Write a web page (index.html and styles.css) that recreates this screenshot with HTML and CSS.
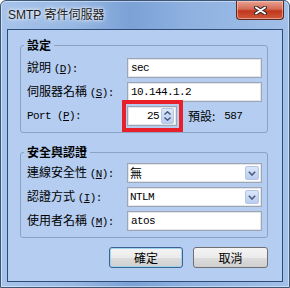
FILE: index.html
```html
<html>
    <head>
        <title>SMTP 寄件伺服器</title>
        <link rel="stylesheet" href="styles.css">
    </head>
    <body>
        <div class="window">
            <div class="titlebar">
                <span class="title">SMTP 寄件伺服器</span>
                <div class="close">
                    <svg width="13" height="9" viewBox="0 0 13 9">
                        <path d="M2 1.5 L11 7.5 M11 1.5 L2 7.5" stroke="#3a2a2a" stroke-width="4" stroke-linecap="round" fill="none"/>
                        <path d="M2 1.5 L11 7.5 M11 1.5 L2 7.5" stroke="#ffffff" stroke-width="2" stroke-linecap="round" fill="none"/>
                    </svg>
                </div>
            </div>

            <div class="client">
                <fieldset class="group">
                    <legend>設定</legend>
                    <div class="row">
                        <label>說明 <span class="lat">(<u>D</u>):</span></label>
                        <div class="field"><span class="lat">sec</span></div>
                    </div>
                    <div class="row">
                        <label>伺服器名稱 <span class="lat">(<u>S</u>):</span></label>
                        <div class="field"><span class="lat">10.144.1.2</span></div>
                    </div>
                    <div class="row">
                        <label><span class="lat">Port (<u>P</u>):</span></label>
                        <div class="spinner">
                            <span class="lat spin-value">25</span>
                            <div class="spin-btn">
                                <svg width="7" height="4" viewBox="0 0 7 4"><path d="M0.5 3.5 L3.5 0.8 L6.5 3.5" stroke="#4c5d80" stroke-width="1.5" fill="none"/></svg>
                                <svg width="7" height="4" viewBox="0 0 7 4"><path d="M0.5 0.5 L3.5 3.2 L6.5 0.5" stroke="#4c5d80" stroke-width="1.5" fill="none"/></svg>
                            </div>
                            <div class="mark"></div>
                        </div>
                        <span class="default">預設:</span>
                        <span class="lat default-num">587</span>
                    </div>
                </fieldset>

                <fieldset class="group group2">
                    <legend>安全與認證</legend>
                    <div class="row">
                        <label>連線安全性 <span class="lat">(<u>N</u>):</span></label>
                        <div class="field select">
                            <span>無</span>
                            <div class="drop-btn">
                                <svg width="8" height="5" viewBox="0 0 8 5"><path d="M0.8 0.8 L4 4 L7.2 0.8" stroke="#4c5d80" stroke-width="1.6" fill="none"/></svg>
                            </div>
                        </div>
                    </div>
                    <div class="row">
                        <label>認證方式 <span class="lat">(<u>I</u>):</span></label>
                        <div class="field select">
                            <span class="lat">NTLM</span>
                            <div class="drop-btn">
                                <svg width="8" height="5" viewBox="0 0 8 5"><path d="M0.8 0.8 L4 4 L7.2 0.8" stroke="#4c5d80" stroke-width="1.6" fill="none"/></svg>
                            </div>
                        </div>
                    </div>
                    <div class="row">
                        <label>使用者名稱 <span class="lat">(<u>M</u>):</span></label>
                        <div class="field"><span class="lat">atos</span></div>
                    </div>
                </fieldset>

                <div class="buttons">
                    <button class="btn btn-default">確定</button>
                    <button class="btn">取消</button>
                </div>
            </div>
        </div>
    </body>
</html>
```

FILE: styles.css
```css
body {
    margin: 0;
    width: 290px;
    height: 288px;
    overflow: hidden;
    background: #ffffff;
    font-family: "Noto Sans CJK TC", sans-serif;
    font-size: 12px;
    color: #000;
}

.window {
    box-sizing: border-box;
    width: 290px;
    height: 288px;
    border: 1px solid #3e5776;
    border-radius: 6px 6px 0 0;
    padding: 0 6px 5px 6px;
    background: linear-gradient(90deg, #a6c3ea 0%, #98b8e3 25%, #7ba1d6 45%, #8eb1e0 65%, #a2c0e8 100%);
    box-shadow: inset 0 0 0 1px rgba(255, 255, 255, 0.45);
}

.titlebar {
    height: 28px;
    display: flex;
    align-items: flex-start;
    justify-content: space-between;
}

.title {
    margin-top: 6px;
    margin-left: 1px;
    font-family: "Liberation Sans", "Noto Sans CJK TC", sans-serif;
    font-size: 12px;
    line-height: 16px;
    color: #1b1b1b;
    text-shadow: 0 0 6px #ffffff, 0 0 3px #ffffff;
}

.close {
    box-sizing: border-box;
    width: 48px;
    height: 19px;
    margin-right: -1px;
    border: 1px solid #5c2a22;
    border-top: none;
    border-radius: 0 0 4px 4px;
    background: linear-gradient(#e9a193 0%, #d46c56 45%, #c2361c 55%, #cf5a3c 100%);
    box-shadow: inset 0 0 0 1px rgba(255, 220, 210, 0.5);
    display: flex;
    align-items: center;
    justify-content: center;
}

.client {
    box-sizing: border-box;
    height: 253px;
    border: 1px solid #2d4c78;
    background: #b4cdf0;
    padding: 8px 14px 0 12px;
    display: flex;
    flex-direction: column;
}

.group {
    margin: 0;
    width: 248px;
    box-sizing: border-box;
    border: 1px solid #8aa2c4;
    border-radius: 3px;
    padding: 6px 5px 6px 6px;
    display: flex;
    flex-direction: column;
    gap: 4px;
}

.group legend {
    padding: 0 3px;
    margin-left: -3px;
    font-weight: bold;
    line-height: 14px;
}

.group2 {
    margin-top: 12px;
    padding-top: 4px;
}

.row {
    display: flex;
    align-items: center;
    height: 20px;
}

.row label {
    width: 100px;
    line-height: 14px;
    white-space: nowrap;
}

.lat {
    font-family: "Liberation Mono", monospace;
    font-size: 11px;
    letter-spacing: -0.6px;
}

.field {
    box-sizing: border-box;
    width: 135px;
    height: 20px;
    border: 1px solid #9ea6b1;
    box-shadow: inset 0 0 0 1px #e2e5ea;
    background: #fff;
    padding: 0 3px;
    display: flex;
    align-items: center;
    line-height: 14px;
}

.select {
    padding: 0 2px 0 2px;
    justify-content: space-between;
}

.drop-btn {
    box-sizing: border-box;
    width: 14px;
    height: 14px;
    border: 1px solid #b3c6e6;
    border-radius: 2px;
    background: linear-gradient(#dbe6f8, #b9cdef);
    display: flex;
    align-items: center;
    justify-content: center;
}

.spinner {
    position: relative;
    box-sizing: border-box;
    width: 50px;
    height: 20px;
    border: 1px solid #9ea6b1;
    box-shadow: inset 0 0 0 1px #e2e5ea;
    background: #fff;
    display: flex;
    align-items: center;
    justify-content: flex-end;
    padding: 1px 2px 1px 0;
}

.spin-value {
    margin-right: 2px;
    line-height: 14px;
}

.spin-btn {
    box-sizing: border-box;
    width: 13px;
    height: 16px;
    border: 1px solid #b3c6e6;
    border-radius: 2px;
    background: linear-gradient(#dbe6f8, #b9cdef);
    display: flex;
    flex-direction: column;
    align-items: center;
    justify-content: center;
    gap: 2px;
}

.mark {
    position: absolute;
    left: -6px;
    top: -7px;
    right: -7px;
    bottom: -7px;
    border: 4px solid #e8202a;
}

.default {
    margin-left: 11px;
    line-height: 14px;
}

.default-num {
    margin-left: 9px;
}

.buttons {
    display: flex;
    justify-content: flex-end;
    gap: 10px;
    margin-top: 9px;
}

.btn {
    box-sizing: border-box;
    width: 75px;
    height: 21px;
    padding: 0;
    border: 1px solid #707070;
    border-radius: 3px;
    background: linear-gradient(#f4f4f4 0%, #ebebeb 50%, #dddddd 51%, #cfcfcf 100%);
    font-family: "Noto Sans CJK TC", sans-serif;
    font-size: 12px;
    line-height: 14px;
    color: #000;
}

.btn-default {
    width: 74px;
    border-color: #3c6394;
    box-shadow: inset 0 0 0 1px #9fd3f0;
}
```
